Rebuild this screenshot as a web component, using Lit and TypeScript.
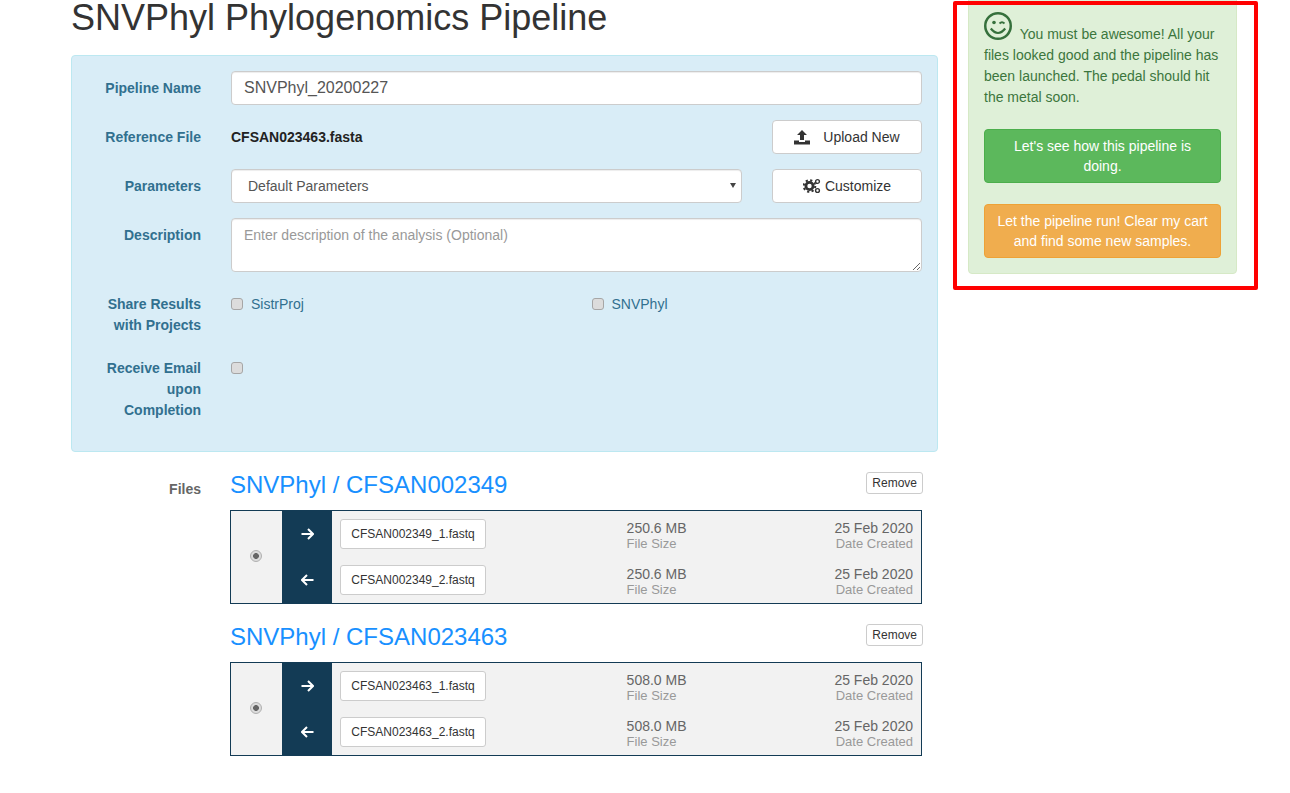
import { LitElement, html, svg, css } from "lit";
import { customElement } from "lit/decorators.js";

interface SampleFile {
  name: string;
  size: string;
  date: string;
}

interface Sample {
  title: string;
  files: SampleFile[];
}

const SAMPLES: Sample[] = [
  {
    title: "SNVPhyl / CFSAN002349",
    files: [
      { name: "CFSAN002349_1.fastq", size: "250.6 MB", date: "25 Feb 2020" },
      { name: "CFSAN002349_2.fastq", size: "250.6 MB", date: "25 Feb 2020" },
    ],
  },
  {
    title: "SNVPhyl / CFSAN023463",
    files: [
      { name: "CFSAN023463_1.fastq", size: "508.0 MB", date: "25 Feb 2020" },
      { name: "CFSAN023463_2.fastq", size: "508.0 MB", date: "25 Feb 2020" },
    ],
  },
];

const arrowRight = svg`<path d="M0.5 6H12M7 1l5 5-5 5" fill="none" stroke="#fff" stroke-width="2"/>`;
const arrowLeft = svg`<path d="M12.5 6H1M6 1L1 6l5 5" fill="none" stroke="#fff" stroke-width="2"/>`;

@customElement("app-root")
export class AppRoot extends LitElement {
  static styles = css`
    :host {
      display: block;
      font-family: "Liberation Sans", Arial, sans-serif;
      font-size: 14px;
      line-height: 21px;
      color: #333;
    }
    * {
      box-sizing: border-box;
    }
    .page {
      display: grid;
      grid-template-columns: 867px 269px;
      gap: 30px;
      width: 1290px;
      padding-left: 71px;
    }
    h1 {
      margin: 0 0 19px;
      font-size: 36px;
      line-height: 36px;
      font-weight: 400;
    }
    .panel {
      display: flex;
      flex-direction: column;
      gap: 15px;
      padding: 15px 15px 30px;
      background: #d9edf7;
      border: 1px solid #bce8f1;
      border-radius: 4px;
    }
    .row {
      display: grid;
      grid-template-columns: 114px 1fr;
      column-gap: 30px;
    }
    .label {
      padding-top: 7px;
      text-align: right;
      font-weight: 700;
      color: #31708f;
    }
    .split {
      display: grid;
      grid-template-columns: 1fr 150px;
      column-gap: 30px;
      align-items: center;
    }
    .control {
      display: block;
      width: 100%;
      height: 34px;
      padding: 6px 12px;
      font: 14px/20px "Liberation Sans", Arial, sans-serif;
      color: #555;
      background: #fff;
      border: 1px solid #ccc;
      border-radius: 4px;
      box-shadow: inset 0 1px 1px rgba(0, 0, 0, 0.075);
    }
    input.control {
      font-size: 16px;
    }
    select.control {
      appearance: none;
      padding-left: 16px;
    }
    textarea.control {
      height: 54px;
    }
    textarea.control::placeholder {
      color: #999;
    }
    .select-wrap {
      position: relative;
    }
    .select-wrap::after {
      content: "";
      position: absolute;
      right: 6px;
      top: 14px;
      border-left: 3px solid transparent;
      border-right: 3px solid transparent;
      border-top: 5px solid #444;
    }
    .btn {
      display: flex;
      align-items: center;
      justify-content: center;
      height: 34px;
      font: 14px/20px "Liberation Sans", Arial, sans-serif;
      color: #333;
      background: #fff;
      border: 1px solid #ccc;
      border-radius: 4px;
    }
    .upload {
      gap: 13px;
    }
    .customize {
      gap: 4px;
    }
    .ref {
      font-weight: 700;
      color: #222;
    }
    .checks {
      display: grid;
      grid-template-columns: 360.5px 1fr;
      padding-top: 7px;
    }
    .check {
      display: flex;
      gap: 8px;
      align-items: flex-start;
      color: #31708f;
    }
    .check input {
      appearance: none;
      margin: 4px 0 0;
      width: 12px;
      height: 12px;
      background: #dcdcdc;
      border: 1px solid #a6a6a6;
      border-radius: 3px;
    }
    .files {
      margin-top: 20px;
      padding-left: 16px;
      display: grid;
      grid-template-columns: 114px 693px;
      column-gap: 29px;
    }
    .files-label {
      padding-top: 7px;
      text-align: right;
      font-weight: 700;
      color: #666;
    }
    .sample {
      margin-bottom: 20px;
    }
    .sample-head {
      display: flex;
      justify-content: space-between;
      align-items: flex-start;
      height: 38px;
    }
    .sample-title {
      font-size: 24px;
      line-height: 26px;
      color: #1890ff;
    }
    .remove {
      height: 22px;
      padding: 0 5px;
      font: 12px/18px "Liberation Sans", Arial, sans-serif;
      color: #333;
      background: #fff;
      border: 1px solid #ccc;
      border-radius: 3px;
    }
    .box {
      display: grid;
      grid-template-columns: 51px 1fr;
      width: 692px;
      background: #f2f2f2;
      border: 1px solid #133b55;
    }
    .pick {
      display: flex;
      align-items: center;
      justify-content: center;
      padding: 0 1px 2px 0;
    }
    .pick input {
      appearance: none;
      margin: 0;
      width: 12px;
      height: 12px;
      border: 1px solid #b0b0b0;
      border-radius: 50%;
      background: radial-gradient(circle, #666 0 2.6px, #dcdcdc 3.2px);
    }
    .file-row {
      display: grid;
      grid-template-columns: 50px 294.6px 1fr auto;
      height: 46px;
    }
    .dir {
      display: flex;
      align-items: center;
      justify-content: center;
      background: #133b55;
    }
    .file-cell {
      padding: 8px;
    }
    .file-btn {
      width: 146px;
      height: 30px;
      padding: 0;
      font: 12px/18px "Liberation Sans", Arial, sans-serif;
      color: #333;
      background: #fff;
      border: 1px solid #ccc;
      border-radius: 3px;
    }
    .stat {
      padding-top: 9px;
      color: #666;
      line-height: 16px;
    }
    .stat small {
      display: block;
      font-size: 13px;
      color: #999;
    }
    .stat.right {
      padding-right: 8px;
      text-align: right;
    }
    .alert {
      position: relative;
      align-self: start;
      margin-top: -4px;
      padding: 15px;
      color: #3c763d;
      background: #dff0d8;
      border: 1px solid #d6e9c6;
      border-radius: 4px;
    }
    .alert p {
      margin: 0 0 21px;
    }
    .wink {
      margin-right: 4px;
      vertical-align: -1px;
    }
    .action {
      display: block;
      width: 100%;
      padding: 6px 12px;
      font: 14px/20px "Liberation Sans", Arial, sans-serif;
      text-align: center;
      color: #fff;
      border: 1px solid;
      border-radius: 4px;
    }
    .action + .action {
      margin-top: 21px;
    }
    .go {
      background: #5cb85c;
      border-color: #4cae4c;
    }
    .clear {
      background: #f0ad4e;
      border-color: #eea236;
    }
    /* red annotation drawn over the alert */
    .highlight {
      position: absolute;
      left: -16px;
      top: 4px;
      width: 305px;
      height: 289px;
      border: 4px solid #f00;
      border-radius: 2px;
      pointer-events: none;
    }
  `;

  private renderSample(sample: Sample) {
    return html`
      <div class="sample">
        <div class="sample-head">
          <span class="sample-title">${sample.title}</span>
          <button class="remove">Remove</button>
        </div>
        <div class="box">
          <div class="pick"><input type="radio" checked disabled /></div>
          <div>
            ${sample.files.map(
              (file, i) => html`
                <div class="file-row">
                  <div class="dir">
                    <svg width="13" height="12" viewBox="0 0 13 12">${i === 0 ? arrowRight : arrowLeft}</svg>
                  </div>
                  <div class="file-cell"><button class="file-btn">${file.name}</button></div>
                  <div class="stat">
                    <div>${file.size}</div>
                    <small>File Size</small>
                  </div>
                  <div class="stat right">
                    <div>${file.date}</div>
                    <small>Date Created</small>
                  </div>
                </div>
              `,
            )}
          </div>
        </div>
      </div>
    `;
  }

  render() {
    return html`
      <div class="page">
        <div>
          <h1>SNVPhyl Phylogenomics Pipeline</h1>
          <div class="panel">
            <div class="row">
              <div class="label">Pipeline Name</div>
              <input class="control" .value=${"SNVPhyl_20200227"} />
            </div>
            <div class="row">
              <div class="label">Reference File</div>
              <div class="split">
                <div class="ref">CFSAN023463.fasta</div>
                <button class="btn upload">
                  <svg width="16" height="16" viewBox="0 0 16 16">
                    <path d="M8 1l5 5h-3v5H6V6H3zM0 11.5h5v1.5h6v-1.5h5V15.5H0z" fill="#333" />
                  </svg>
                  Upload New
                </button>
              </div>
            </div>
            <div class="row">
              <div class="label">Parameters</div>
              <div class="split">
                <div class="select-wrap">
                  <select class="control"><option>Default Parameters</option></select>
                </div>
                <button class="btn customize">
                  <svg width="18" height="16" viewBox="0 0 18 16">
                    <g fill="none" stroke="#333">
                      <circle cx="6.5" cy="8" r="3.6" stroke-width="2.8" />
                      <circle cx="6.5" cy="8" r="5.8" stroke-width="2" stroke-dasharray="2.2 2.35" />
                      <circle cx="14.5" cy="3.5" r="1.9" stroke-width="1.4" />
                      <circle cx="14.5" cy="12.5" r="1.9" stroke-width="1.4" />
                    </g>
                  </svg>
                  Customize
                </button>
              </div>
            </div>
            <div class="row">
              <div class="label">Description</div>
              <textarea class="control" placeholder="Enter description of the analysis (Optional)"></textarea>
            </div>
            <div class="row">
              <div class="label">Share Results with Projects</div>
              <div class="checks">
                <label class="check"><input type="checkbox" disabled />SistrProj</label>
                <label class="check"><input type="checkbox" disabled />SNVPhyl</label>
              </div>
            </div>
            <div class="row">
              <div class="label">Receive Email upon Completion</div>
              <div class="checks">
                <label class="check"><input type="checkbox" disabled /></label>
              </div>
            </div>
          </div>
          <div class="files">
            <div class="files-label">Files</div>
            <div>${SAMPLES.map((s) => this.renderSample(s))}</div>
          </div>
        </div>
        <div class="alert">
          <p>
            <svg class="wink" width="28" height="28" viewBox="0 0 28 28" fill="none" stroke="#35703c">
              <circle cx="14" cy="14" r="12.75" stroke-width="2.5" />
              <circle cx="10" cy="10.5" r="1.8" fill="#35703c" stroke="none" />
              <path d="M15.5 11.5q2.5-2.5 5 0" stroke-width="1.8" />
              <path d="M6.8 16.5q7.2 9 14.4 0" stroke-width="2.2" />
            </svg>
            You must be awesome! All your files looked good and the pipeline has been launched. The pedal should hit
            the metal soon.
          </p>
          <button class="action go">Let's see how this pipeline is doing.</button>
          <button class="action clear">Let the pipeline run! Clear my cart and find some new samples.</button>
          <div class="highlight"></div>
        </div>
      </div>
    `;
  }
}
